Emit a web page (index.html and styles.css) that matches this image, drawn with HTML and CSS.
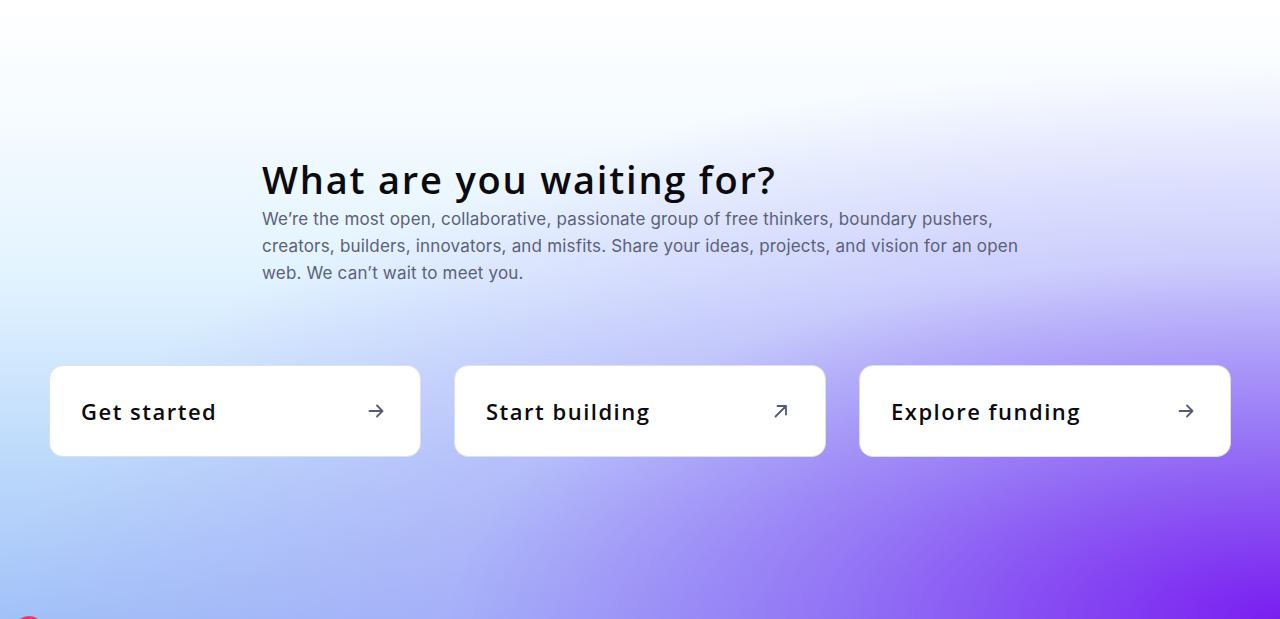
FILE: index.html
```html
<!DOCTYPE html>
<html lang="en">
<head>
<meta charset="utf-8">
<title>What are you waiting for?</title>
<link rel="stylesheet" href="styles.css">
</head>
<body>
<section class="cta">
  <div class="intro">
    <h2 class="title">What are you waiting for?</h2>
    <p class="lead">We’re the most open, collaborative, passionate group of free thinkers, boundary pushers, creators, builders, innovators, and misfits. Share your ideas, projects, and vision for an open web. We can’t wait to meet you.</p>
  </div>
  <div class="cards">
    <a class="card" href="#">
      <span class="card-label">Get started</span>
      <svg class="icon" width="20" height="20" viewBox="0 0 20 20" fill="none" stroke="currentColor" stroke-width="1.8" stroke-linecap="round" stroke-linejoin="round"><path d="M3.5 10h13M11 4.5l5.5 5.5-5.5 5.5"/></svg>
    </a>
    <a class="card" href="#">
      <span class="card-label">Start building</span>
      <svg class="icon" width="20" height="20" viewBox="0 0 20 20" fill="none" stroke="currentColor" stroke-width="1.8" stroke-linecap="round" stroke-linejoin="round"><path d="M4.5 15.5l10-10M6.5 5h8.5v8.5"/></svg>
    </a>
    <a class="card" href="#">
      <span class="card-label">Explore funding</span>
      <svg class="icon" width="20" height="20" viewBox="0 0 20 20" fill="none" stroke="currentColor" stroke-width="1.8" stroke-linecap="round" stroke-linejoin="round"><path d="M3.5 10h13M11 4.5l5.5 5.5-5.5 5.5"/></svg>
    </a>
  </div>
  <span class="bubble"></span>
</section>
</body>
</html>
```
FILE: styles.css
```css
* { box-sizing: border-box; }
html, body { margin: 0; padding: 0; }
body {
  font-family: "Inter", "Noto Sans", sans-serif;
  width: 1280px;
  height: 619px;
  overflow: hidden;
}
.cta {
  position: relative;
  height: 619px;
  padding: 155px 49px 0;
  background:
    radial-gradient(ellipse 100% 90% at 100% 100%, rgba(122,30,240,1) 0%, rgba(140,90,244,0.75) 35%, rgba(170,150,248,0.4) 65%, rgba(200,200,250,0) 100%),
    linear-gradient(180deg, #ffffff 0%, #f6fbff 18%, #e2f3ff 45%, #bcd9fb 75%, #a2c2f8 100%);
}
.intro {
  padding-left: 213px;
  max-width: 980px;
}
.title {
  margin: 0;
  font-family: "Open Sans", sans-serif;
  font-weight: 600;
  font-size: 38px;
  line-height: 48px;
  color: #0b0b0f;
  letter-spacing: 1.8px;
}
.lead {
  margin: 3px 0 0;
  max-width: 760px;
  font-size: 17px;
  line-height: 27px;
  letter-spacing: 0.18px;
  color: #5b6178;
}
.cards {
  display: grid;
  grid-template-columns: repeat(3, 1fr);
  gap: 33px;
  margin-top: 78px;
}
.card {
  display: flex;
  align-items: center;
  justify-content: space-between;
  height: 92px;
  padding: 0 34px 0 31px;
  background: #ffffff;
  border: 1px solid #d9e1f1;
  border-radius: 14px;
  text-decoration: none;
}
.card-label {
  font-family: "Open Sans", sans-serif;
  font-weight: 600;
  font-size: 22px;
  letter-spacing: 1.5px;
  color: #0b0b0f;
}
.icon { color: #545a78; }
.bubble {
  position: absolute;
  left: 14px;
  top: 616px;
  width: 30px;
  height: 30px;
  border-radius: 50%;
  background: #f2336b;
}
```
